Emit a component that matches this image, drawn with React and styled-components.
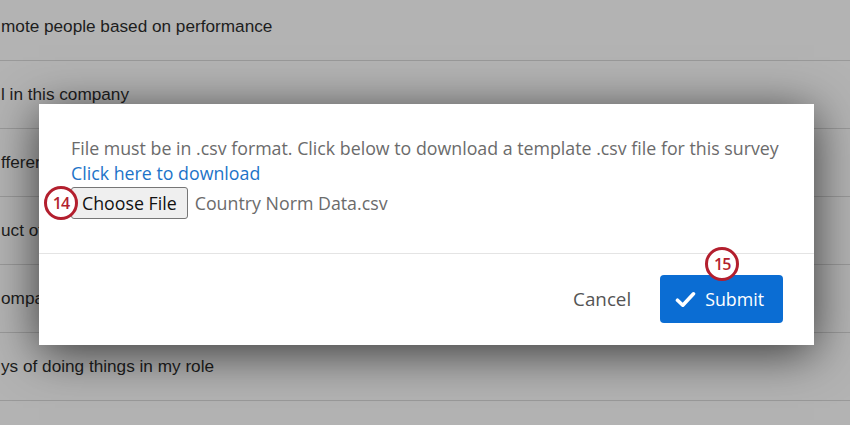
import React from "react";
import styled, { createGlobalStyle } from "styled-components";

const GlobalStyle = createGlobalStyle`
  html, body {
    margin: 0;
    padding: 0;
    background: #b3b3b3;
    overflow: hidden;
  }
`;

const rows = [
  "mote people based on performance",
  "l in this company",
  "fferent perspectives are valued here",
  "uct of this company",
  "ompany to others",
  "ys of doing things in my role",
];

const App = () => {
  return (
    <>
      <GlobalStyle />
      <Page>
        <List>
          {rows.map((text) => (
            <Row key={text}>{text}</Row>
          ))}
        </List>

        {/* Upload dialog */}
        <Modal>
          <Body>
            <Hint>
              File must be in .csv format. Click below to download a template .csv file for this survey
            </Hint>
            <Link href="#">Click here to download</Link>
            <FileRow>
              <Badge $left="-27px" $top="-1px">14</Badge>
              <ChooseButton type="button">Choose File</ChooseButton>
              <FileName>Country Norm Data.csv</FileName>
            </FileRow>
          </Body>
          <Footer>
            <CancelButton type="button">Cancel</CancelButton>
            <SubmitButton type="button">
              <Badge $left="45px" $top="-28px">15</Badge>
              <svg width="21" height="17" viewBox="0 0 21 17" fill="none">
                <path
                  d="M2.5 9.2 L7.8 14.2 L18.5 2.8"
                  stroke="#fff"
                  strokeWidth="3.6"
                  strokeLinecap="round"
                  strokeLinejoin="round"
                />
              </svg>
              Submit
            </SubmitButton>
          </Footer>
        </Modal>
      </Page>
    </>
  );
};

export default App;

const Page = styled.div`
  position: relative;
  width: 850px;
  height: 425px;
  overflow: hidden;
  background: #b3b3b3;
`;

const List = styled.div`
  display: flex;
  flex-direction: column;
  margin-top: -7px;
`;

const Row = styled.div`
  height: 67px;
  display: flex;
  align-items: center;
  padding-left: 1px;
  border-bottom: 1px solid #999;
  font-family: "Liberation Sans", Arial, sans-serif;
  font-size: 17.2px;
  color: #1d1d1d;
  white-space: nowrap;
`;

const Modal = styled.div`
  position: absolute;
  left: 39px;
  top: 104px;
  width: 775px;
  background: #fff;
  box-shadow: 0 8px 45px rgba(0, 0, 0, 0.68);
  font-family: "Open Sans", "Liberation Sans", sans-serif;
`;

const Body = styled.div`
  display: flex;
  flex-direction: column;
  align-items: flex-start;
  padding: 32px 32px 34px;
  border-bottom: 1px solid #e4e4e4;
`;

const Hint = styled.div`
  height: 25px;
  font-size: 17.8px;
  line-height: 25px;
  color: #6b6b6b;
  white-space: nowrap;
`;

const Link = styled.a`
  display: block;
  height: 25px;
  font-size: 17.8px;
  line-height: 25px;
  color: #1d73c8;
  text-decoration: none;
`;

const FileRow = styled.div`
  position: relative;
  display: flex;
  align-items: center;
  gap: 7px;
  margin-top: 1px;
`;

const ChooseButton = styled.button`
  height: 32px;
  padding: 0 10px;
  border: 1px solid #767676;
  border-radius: 3px;
  background: #efefef;
  font-family: "Open Sans", "Liberation Sans", sans-serif;
  font-size: 17.8px;
  color: #111;
`;

const FileName = styled.span`
  font-size: 17.8px;
  color: #6b6b6b;
`;

const Footer = styled.div`
  display: flex;
  justify-content: flex-end;
  align-items: center;
  gap: 29px;
  padding: 21px 31px 22px;
`;

const CancelButton = styled.button`
  border: none;
  background: none;
  padding: 0;
  font-family: "Open Sans", "Liberation Sans", sans-serif;
  font-size: 18.8px;
  color: #545454;
`;

const SubmitButton = styled.button`
  position: relative;
  display: flex;
  align-items: center;
  gap: 9px;
  height: 48px;
  padding: 0 19px 0 15px;
  border: none;
  border-radius: 4px;
  background: #0b6dd3;
  font-family: "Open Sans", "Liberation Sans", sans-serif;
  font-size: 17.8px;
  color: #fff;
`;

const Badge = styled.span`
  position: absolute;
  left: ${(p) => p.$left};
  top: ${(p) => p.$top};
  width: 28px;
  height: 28px;
  border: 3px solid #b31f2e;
  border-radius: 50%;
  background: #fff;
  display: flex;
  align-items: center;
  justify-content: center;
  font-family: "Open Sans", "Liberation Sans", sans-serif;
  font-size: 16px;
  font-weight: 600;
  color: #b31f2e;
  letter-spacing: -1px;
  z-index: 1;
`;
